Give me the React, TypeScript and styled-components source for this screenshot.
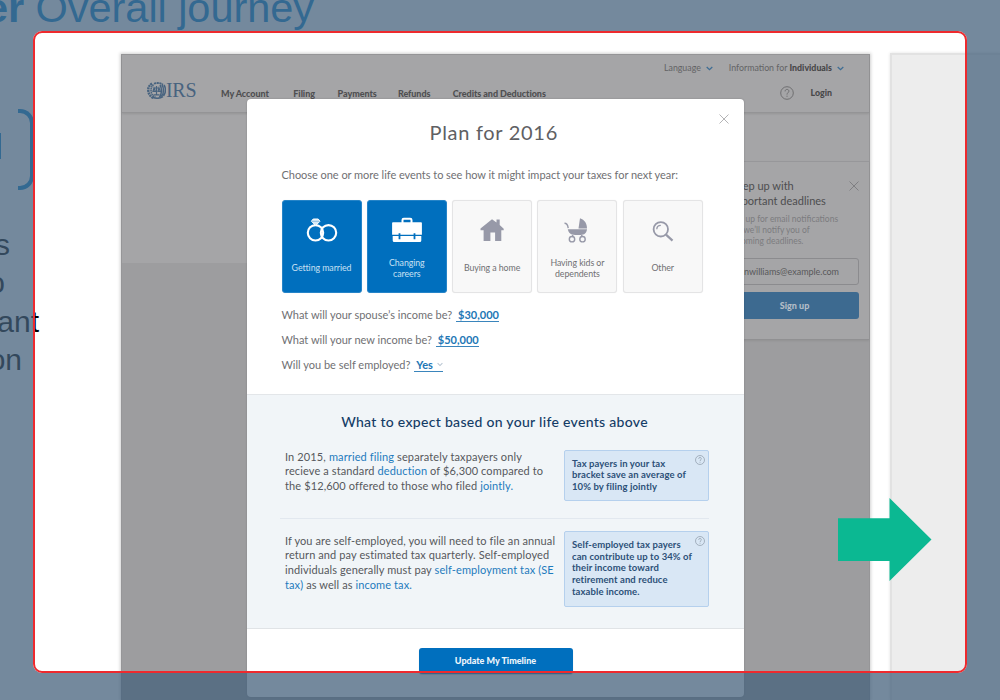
import React from "react";
import styled, { createGlobalStyle } from "styled-components";

const GlobalStyle = createGlobalStyle`
  *, *::before, *::after { box-sizing: border-box; }
  body { margin: 0; background: #fff; font-family: Lato, "Liberation Sans", sans-serif; }
  h1, h2, h3, p { margin: 0; font-weight: inherit; }
`;

const Slide = styled.main`
  position: relative;
  width: 1000px;
  height: 700px;
  overflow: hidden;
  display: grid;
  grid-template-rows: 54px 1fr;
`;

const SlideTitle = styled.h1`
  font: 400 41.5px/46px "Liberation Sans", sans-serif;
  letter-spacing: -0.05px;
  color: #0080cf;
  white-space: nowrap;
  margin: -15px 0 0 -15px;
`;

const Columns = styled.div`
  display: grid;
  grid-template-columns: 121px 749px 19px 111px;
  min-height: 0;
`;

const Notes = styled.aside`
  padding-top: 55px;
`;

const BracketRow = styled.div`
  display: flex;
  justify-content: space-between;
  align-items: center;
  width: 34px;
  height: 81px;
  margin-bottom: 36px;
`;

const BracketTick = styled.span`
  width: 1px;
  height: 26px;
  margin-top: -8px;
  background: #0080cf;
`;

const Bracket = styled.span`
  width: 16px;
  height: 81px;
  border: 4px solid #0080cf;
  border-left: 0;
  border-radius: 0 14px 14px 0;
`;

const NoteLine = styled.p<{ $end: number }>`
  display: flex;
  justify-content: flex-end;
  width: ${(p) => p.$end}px;
  height: 38.4px;
  font: 400 30px/38.4px "Liberation Sans", sans-serif;
  color: #000;
`;

const Screen = styled.section`
  position: relative;
  border: 1px solid #969698;
  border-bottom: 0;
  background: #9d9d9f;
  box-shadow: 0 0 3px 1px rgba(0, 0, 0, 0.18);
`;

const NextScreen = styled.section`
  grid-column: 4;
  margin: -1px 0 0 1px;
  border: 2px solid #e2e2e2;
  border-width: 2px 0 0 2px;
  background: #ededed;
  box-shadow: 0 0 3px rgba(0, 0, 0, 0.12);
`;

const Header = styled.header`
  display: flex;
  align-items: flex-start;
  height: 58px;
  padding-left: 25px;
  background: #a5a5a7;
  border-bottom: 1px solid #949496;
  box-shadow: 0 1px 2px rgba(0, 0, 0, 0.1);
  position: relative;
`;

const Logo = styled.div`
  display: flex;
  align-items: center;
  width: 74px;
  margin-top: 24px;
  font: 400 20px/22px "Liberation Serif", serif;
  letter-spacing: -0.3px;
  color: #48637f;
`;

const Nav = styled.nav`
  display: flex;
  gap: 25.3px;
  margin-top: 33px;
  font-weight: 900;
  font-size: 9px;
  line-height: 12px;
  letter-spacing: -0.05px;
  white-space: nowrap;
  color: #4f4f51;
`;

const NavItem = styled.span<{ $width?: number }>`
  width: ${(p) => (p.$width ? `${p.$width}px` : "auto")};
`;

const Account = styled.div`
  margin-left: auto;
  padding-right: 25px;
  display: flex;
  flex-direction: column;
  align-items: flex-end;
  font-size: 8.8px;
  line-height: 12px;
  color: #636365;
  white-space: nowrap;
`;

const Options = styled.div`
  display: flex;
  gap: 16px;
  margin-top: 7px;
`;

const Option = styled.span`
  display: flex;
  align-items: center;
  gap: 5px;
`;

const Strong = styled.b`
  font-weight: 900;
  color: #484849;
`;

const LoginRow = styled.div`
  display: flex;
  align-items: center;
  gap: 17px;
  margin: 11.5px 12px 0 0;
`;

const Hero = styled.div`
  height: 150px;
  background: #a5a5a7;
  display: flex;
  justify-content: flex-end;
  align-items: flex-start;
`;

const Signup = styled.div`
  width: 150px;
  height: 179px;
  margin-top: 48px;
  padding: 17px 10px 0 11px;
  background: #a5a5a7;
  border-top: 1px solid #97979a;
  border-bottom: 1px solid #909092;
  box-shadow: 0 1px 2px rgba(0, 0, 0, 0.08);
`;

const SignupTop = styled.div`
  display: flex;
  justify-content: space-between;
  height: 35px;
`;

const SignupTitle = styled.h3`
  font-size: 11px;
  line-height: 14.7px;
  color: #4d4d4f;
  white-space: nowrap;
`;

const SignupText = styled.p`
  font-size: 8.5px;
  line-height: 11px;
  margin-left: -2.5px;
  color: #7c7c7f;
  white-space: nowrap;
`;

const CloseSmall = styled.div`
  margin-top: 2px;
  line-height: 0;
`;

const EmailField = styled.div`
  display: flex;
  align-items: center;
  justify-content: flex-end;
  height: 27px;
  margin-top: 11px;
  padding-right: 19px;
  border: 1px solid #8b8b8e;
  border-radius: 3px;
  font-size: 9px;
  color: #58585a;
  letter-spacing: -0.04px;
`;

const SignupButton = styled.div`
  height: 27px;
  margin-top: 7px;
  padding-right: 0;
  border-radius: 3px;
  background: #3d6a90;
  color: #b4bdc7;
  font-weight: 900;
  font-size: 9px;
  line-height: 27px;
  text-align: center;
`;

const Modal = styled.section`
  position: absolute;
  left: 125px;
  top: 43.5px;
  width: 497px;
  height: 598px;
  border-radius: 4px;
  background: #fff;
  box-shadow: 0 0 2px rgba(0, 0, 0, 0.22);
  display: flex;
  flex-direction: column;
`;

const ModalClose = styled.div`
  position: absolute;
  right: 15px;
  top: 15.5px;
  line-height: 0;
`;

const Form = styled.div`
  height: 295px;
  padding: 20px 35px 0 34.5px;
  color: #707073;
`;

const ModalTitle = styled.h2`
  font-size: 20px;
  line-height: 26px;
  letter-spacing: 0.7px;
  text-align: center;
  padding-right: 3px;
  color: #606063;
`;

const Intro = styled.p`
  margin-top: 22px;
  font-size: 11px;
  line-height: 16px;
  letter-spacing: -0.04px;
  white-space: nowrap;
`;

const Cards = styled.div`
  display: grid;
  grid-template-columns: repeat(5, 80px);
  gap: 5.3px;
  margin-top: 17px;
`;

const Card = styled.div<{ $selected?: boolean }>`
  height: 93px;
  border-radius: 3px;
  border: 1px solid ${(p) => (p.$selected ? "#2584c8" : "#e4e4e5")};
  background: ${(p) => (p.$selected ? "#006fbe" : "#f8f8f8")};
  color: ${(p) => (p.$selected ? "#c8e0f3" : "#707073")};
  box-shadow: 0 0 1px rgba(0, 0, 0, 0.1);
  display: flex;
  flex-direction: column;
  align-items: center;
`;

const CardIcon = styled.div`
  height: 52px;
  padding-top: 14px;
  line-height: 0;
`;

const CardLabel = styled.div`
  height: 30px;
  display: flex;
  align-items: center;
  text-align: center;
  font-size: 8.8px;
  line-height: 11px;
  letter-spacing: -0.07px;
  white-space: pre-line;
`;

const Questions = styled.div`
  margin-top: 9.5px;
`;

const Question = styled.p`
  font-size: 11px;
  line-height: 25.2px;
  white-space: nowrap;
`;

const Answer = styled.b`
  display: inline-flex;
  align-items: center;
  gap: 4px;
  height: 13px;
  line-height: 13px;
  margin-left: 1px;
  padding: 0 0 0 2px;
  font-weight: 700;
  color: #2276b5;
  border-bottom: 1px solid #3a85bc;
`;

const Expect = styled.div`
  height: 235px;
  padding: 17.5px 35px 0 33px;
  background: #f1f5f8;
  border-top: 1px solid #e3e6e9;
  border-bottom: 1px solid #e0e3e6;
`;

const ExpectTitle = styled.h3`
  font-weight: 500;
  font-size: 14px;
  line-height: 20px;
  letter-spacing: 0.3px;
  text-align: center;
  color: #143c66;
`;

const Fact = styled.div<{ $first?: boolean }>`
  display: flex;
  justify-content: space-between;
  align-items: flex-start;
  height: ${(p) => (p.$first ? 87 : 90)}px;
  padding: ${(p) => (p.$first ? "17.5px" : "12px")} 0 0 5px;
  border-bottom: ${(p) => (p.$first ? "1px solid #e2e8ef" : "0")};
`;

const FactText = styled.p<{ $spacing: number; $top: number }>`
  padding-top: ${(p) => p.$top}px;
  font-size: 11px;
  line-height: 14.7px;
  letter-spacing: ${(p) => p.$spacing}px;
  white-space: nowrap;
  color: #56585c;
`;

const Link = styled.span`
  color: #1e7bbd;
`;

const Tip = styled.div<{ $height: number }>`
  display: flex;
  justify-content: space-between;
  width: 145px;
  height: ${(p) => p.$height}px;
  padding: 7px 3px 0 7px;
  border: 1px solid #b5d0ed;
  border-radius: 2px;
  background: #d9e7f5;
  font-weight: 700;
  font-size: 9.5px;
  line-height: 11.7px;
  letter-spacing: 0.09px;
  white-space: nowrap;
  color: #2c5078;
`;

const TipHelp = styled.span`
  width: 10px;
  margin: -3px 0 0 -10px;
  line-height: 0;
`;

const Footer = styled.div`
  display: flex;
  justify-content: center;
  padding-top: 19px;
`;

const UpdateButton = styled.div`
  width: 154px;
  height: 26px;
  border-radius: 3px;
  background: #006fbe;
  color: #eef6fc;
  font-weight: 900;
  font-size: 9px;
  line-height: 26px;
  text-align: center;
  box-shadow: 0 1px 1px rgba(0, 0, 0, 0.2);
`;

const Spotlight = styled.div`
  position: absolute;
  left: 33px;
  top: 31px;
  width: 934px;
  height: 642px;
  border: 2px solid #ee2a2e;
  border-radius: 9px;
  box-shadow: 0 0 0 1200px rgba(68, 97, 123, 0.745);
`;

const NextArrow = styled.svg`
  position: absolute;
  left: 838px;
  top: 498px;
`;

const Chevron = ({ color = "#3f6d94", size = 7 }: { color?: string; size?: number }) => (
  <svg width={size} height={5} viewBox="0 0 7 5" fill="none" stroke={color} strokeWidth="1.3">
    <path d="M.7 1 3.5 3.7 6.3 1" />
  </svg>
);

const Close = ({ color }: { color: string }) => (
  <svg width="10" height="10" viewBox="0 0 10 10" stroke={color} strokeWidth="1">
    <path d="M.5.5l9 9M9.5.5l-9 9" />
  </svg>
);

const Help = ({ size, color }: { size: number; color: string }) => (
  <svg width={size} height={size} viewBox="0 0 14 14" fill="none" stroke={color} strokeWidth={size > 12 ? 0.9 : 1.2}>
    <circle cx="7" cy="7" r="6.3" />
    <path d="M5.1 5.4c0-1.3.8-2 1.9-2s1.9.7 1.9 1.8c0 1.4-1.9 1.6-1.9 3.4M7 9.7v1.1" />
  </svg>
);

const Emblem = () => (
  <svg width="19" height="17" viewBox="0 0 19 17" fill="none" stroke="#48637f">
    <path d="M5 1.6C1.8 3.5 1 6 1.3 9s2 5.500 5 7" strokeWidth="2.4" strokeDasharray="2 .6" />
    <path d="M6.500 2.600C4 5 3.500 8 4.500 11s2.500 3.500 4 4" strokeWidth="1.500" strokeDasharray="1.500 .5" />
    <path d="M7 1.800c3-1.400 6.500-.8 9 .9" strokeWidth="1.800" strokeDasharray="2.200 .5" />
    <path d="M17 3c2 3 2 8-.5 11M15 2.800c2 3 2 9-.5 12M13 3c2 3 2 9-.5 12.300M6 15.500c3 1 7 1 10-.8" strokeWidth="1.500" />
    <path d="M6.500 6h6M9.500 4v8.500M7 6l-1 3.500h2.300zM12 6l-1 3.500h2.300zM6.500 12.800h6" strokeWidth="1.200" />
  </svg>
);

const Rings = () => (
  <svg width="32" height="28" viewBox="0 0 32 28" fill="none" stroke="#fff" strokeWidth="2.100">
    <circle cx="9.500" cy="17.800" r="7.700" />
    <circle cx="22.500" cy="17.800" r="7.700" />
    <path d="M7.200 4h5l1.800 2.200-4.300 4.300-4.300-4.300z" fill="#d9eaf6" strokeWidth="1" />
    <path d="M5.800 6.300h7.800" stroke="#5a9fd2" strokeWidth=".6" />
  </svg>
);

const Briefcase = () => (
  <svg width="32" height="28" viewBox="0 0 32 28">
    <path d="M11.500 8V5q0-1.300 1.300-1.300h6.400q1.300 0 1.300 1.300v3" fill="none" stroke="#fff" strokeWidth="2" />
    <path d="M2 7.200h28q.9 0 .9.900v11.600H1.100V8.100q0-.9.9-.9zM1.700 20.900h28.600v4.600q0 1.500-1.500 1.500H3.200q-1.500 0-1.500-1.500z" fill="#fff" />
    <path d="M8.500 18.300v6M23.500 18.300v6" stroke="#006fbe" strokeWidth="1.800" />
  </svg>
);

const House = () => (
  <svg width="32" height="28" viewBox="0 0 32 28" fill="#9799a8">
    <path d="M16 4.200l4.500 3.300V4.600h3.200v5.500l4 3.700v1.400h-2.400V26h-6.200v-8.500h-4.700V26H7.600V15.200H4.500v-1.600z" />
  </svg>
);

const Stroller = () => (
  <svg width="32" height="28" viewBox="0 0 32 28" fill="#9799a8">
    <path d="M19 3.200c4.700 1.800 7 5 7 10.200h-8.500zM6.800 14.300H26c-.4 3.700-2.700 5.700-6.300 5.700h-5.500c-4.200 0-6.700-2-7.400-5.700z" />
    <path d="M3.500 8.300c2.300 0 3.200 1.200 3.700 4.800M12 20l-1 2M20.500 20l1 2" fill="none" stroke="#9799a8" strokeWidth="1.400" />
    <g fill="none" stroke="#9799a8" strokeWidth="1.400">
      <circle cx="11" cy="24.200" r="2.700" />
      <circle cx="21.500" cy="24.200" r="2.700" />
    </g>
  </svg>
);

const Magnifier = () => (
  <svg width="32" height="28" viewBox="0 0 32 28" fill="none" stroke="#9799a8">
    <circle cx="13.800" cy="14.300" r="7.200" strokeWidth="1.800" />
    <path d="M9.800 14.300c0-2.400 1.600-4 4-4" strokeWidth="1.300" />
    <path d="M19 19.600l6.500 6" strokeWidth="2.200" />
  </svg>
);

const lifeEvents = [
  { label: "Getting married", icon: <Rings />, selected: true },
  { label: "Changing\ncareers", icon: <Briefcase />, selected: true },
  { label: "Buying a home", icon: <House /> },
  { label: "Having kids or\ndependents", icon: <Stroller /> },
  { label: "Other", icon: <Magnifier /> },
];

const PlanModal = () => (
  <Modal>
    <ModalClose><Close color="#b4b4b6" /></ModalClose>
    <Form>
      <ModalTitle>Plan for 2016</ModalTitle>
      <Intro>Choose one or more life events to see how it might impact your taxes for next year:</Intro>
      <Cards>
        {lifeEvents.map((event) => (
          <Card key={event.label} $selected={event.selected}>
            <CardIcon>{event.icon}</CardIcon>
            <CardLabel>{event.label}</CardLabel>
          </Card>
        ))}
      </Cards>
      <Questions>
        <Question>What will your spouse’s income be? <Answer>$30,000</Answer></Question>
        <Question>What will your new income be? <Answer>$50,000</Answer></Question>
        <Question>Will you be self employed? <Answer>Yes <Chevron color="#b9c6d2" size={6} /></Answer></Question>
      </Questions>
    </Form>
    <Expect>
      <ExpectTitle>What to expect based on your life events above</ExpectTitle>
      <Fact $first>
        <FactText $spacing={0.12} $top={0}>
          In 2015, <Link>married filing</Link> separately taxpayers only<br />
          recieve a standard <Link>deduction</Link> of $6,300 compared to<br />
          the $12,600 offered to those who filed <Link>jointly.</Link>
        </FactText>
        <Tip $height={51}>
          <div>Tax payers in your tax<br />bracket save an average of<br />10% by filing jointly</div>
          <TipHelp><Help size={10} color="#9aa7b5" /></TipHelp>
        </Tip>
      </Fact>
      <Fact>
        <FactText $spacing={0.1} $top={2.5}>
          If you are self-employed, you will need to file an annual<br />
          return and pay estimated tax quarterly. Self-employed<br />
          individuals generally must pay <Link>self-employment tax (SE</Link><br />
          <Link>tax)</Link> as well as <Link>income tax.</Link>
        </FactText>
        <Tip $height={76}>
          <div>
            Self-employed tax payers<br />can contribute up to 34% of<br />their income toward<br />
            retirement and reduce<br />taxable income.
          </div>
          <TipHelp><Help size={10} color="#9aa7b5" /></TipHelp>
        </Tip>
      </Fact>
    </Expect>
    <Footer><UpdateButton>Update My Timeline</UpdateButton></Footer>
  </Modal>
);

export default function App() {
  return (
    <>
      <GlobalStyle />
      <Slide>
        <SlideTitle><b>er</b> Overall journey</SlideTitle>
        <Columns>
          <Notes>
            <BracketRow><BracketTick /><Bracket /></BracketRow>
            <NoteLine $end={10}>s</NoteLine>
            <NoteLine $end={5}>o</NoteLine>
            <NoteLine $end={39}>ant</NoteLine>
            <NoteLine $end={22}>on</NoteLine>
          </Notes>
          <Screen>
            <Header>
              <Logo><Emblem />IRS</Logo>
              <Nav>
                <NavItem $width={47}>My Account</NavItem>
                <NavItem $width={19}>Filing</NavItem>
                <NavItem $width={35}>Payments</NavItem>
                <NavItem $width={29.5}>Refunds</NavItem>
                <NavItem>Credits and Deductions</NavItem>
              </Nav>
              <Account>
                <Options>
                  <Option>Language <Chevron /></Option>
                  <Option><span>Information for <Strong>Individuals</Strong></span><Chevron /></Option>
                </Options>
                <LoginRow><Help size={14} color="#69696b" /><Strong>Login</Strong></LoginRow>
              </Account>
            </Header>
            <Hero>
              <Signup>
                <SignupTop>
                  <SignupTitle>Keep up with<br />important deadlines</SignupTitle>
                  <CloseSmall><Close color="#7f7f82" /></CloseSmall>
                </SignupTop>
                <SignupText>Sign up for email notifications<br />and we’ll notify you of<br />upcoming deadlines.</SignupText>
                <EmailField>karenwilliams@example.com</EmailField>
                <SignupButton>Sign up</SignupButton>
              </Signup>
            </Hero>
            <PlanModal />
          </Screen>
          <NextScreen />
        </Columns>
        <Spotlight />
        <NextArrow width="94" height="83" viewBox="0 0 94 83">
          <path d="M0 20.300h51.500V0L93.500 41.500 51.500 83V63H0z" fill="#0bb892" />
        </NextArrow>
      </Slide>
    </>
  );
}
